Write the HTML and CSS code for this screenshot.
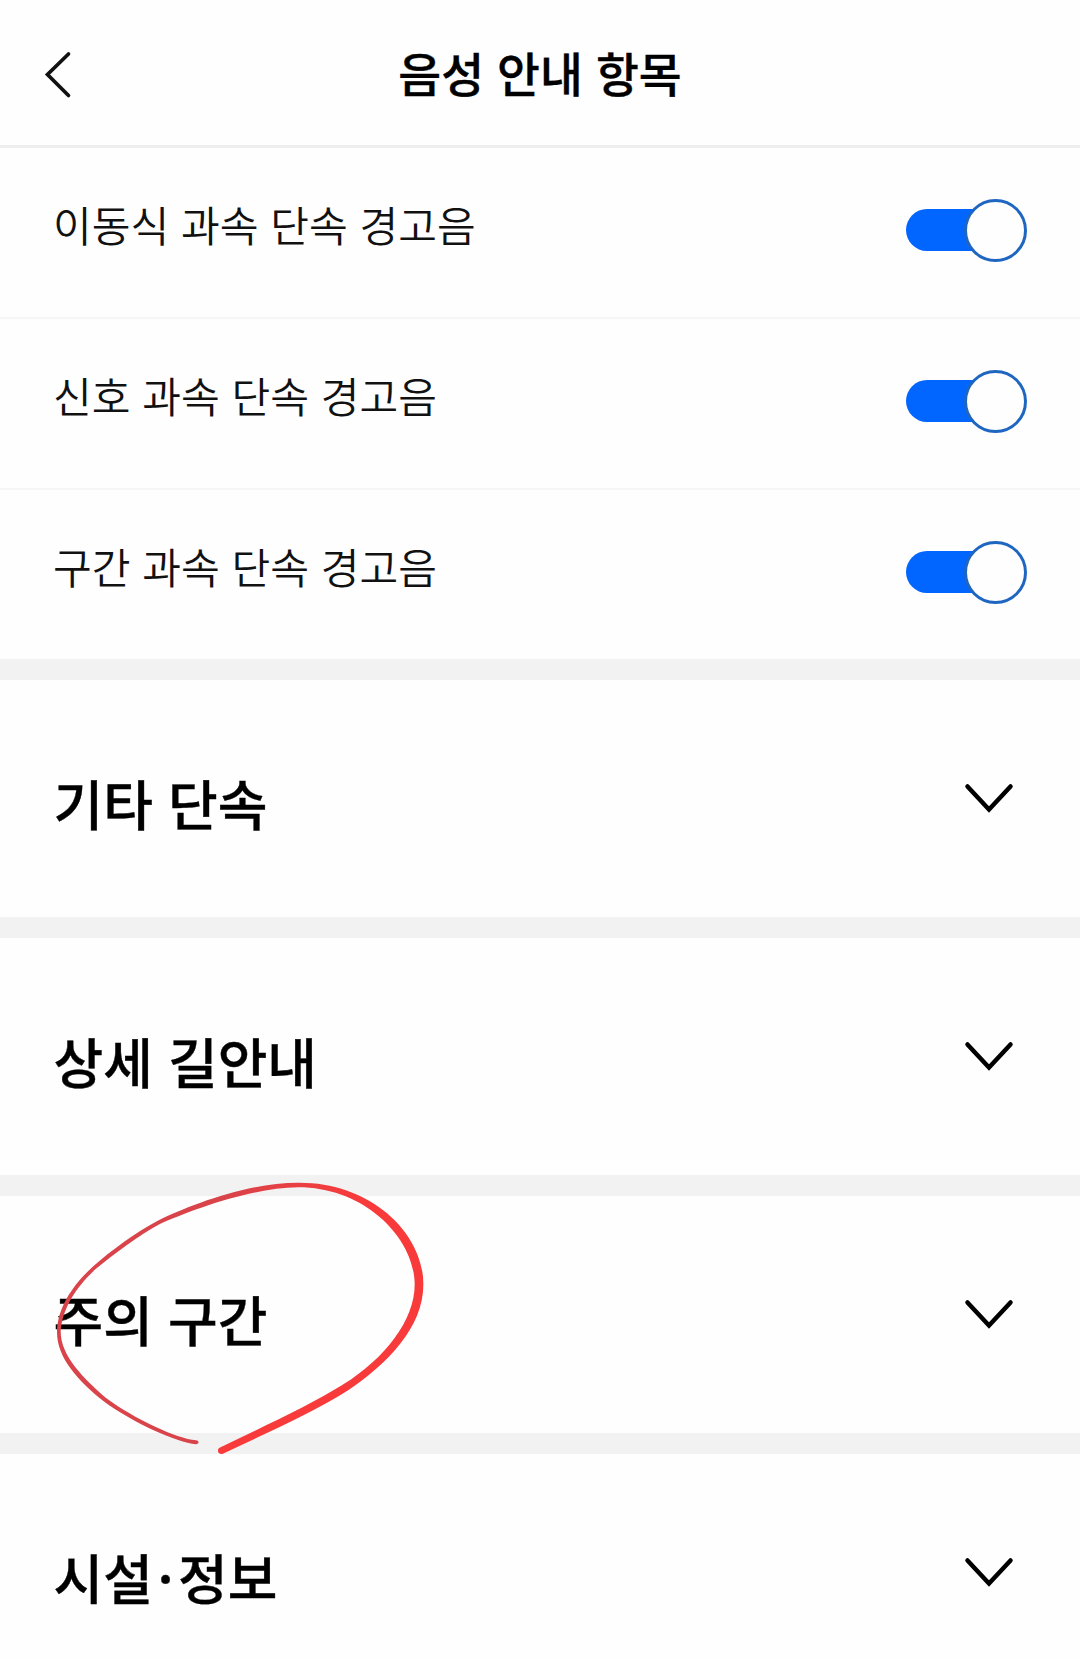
FILE: index.html
```html
<!DOCTYPE html>
<html lang="ko">
<head>
    <meta charset="UTF-8">
    <meta name="viewport" content="width=device-width, initial-scale=1.0">
    <title>음성 안내 항목</title>
    <link rel="stylesheet" href="styles.css">
</head>
<body>
    <header>
        <a class="back" href="#" aria-label="뒤로">
            <svg width="30" height="50" viewBox="0 0 30 50"><path d="M25.500 4 4.500 24.500 25.500 45.500"/></svg>
        </a>
        <h1>음성 안내 항목</h1>
    </header>

    <main>
        <ul class="items">
            <li>
                <span>이동식 과속 단속 경고음</span>
                <div class="toggle"><div class="knob"></div></div>
            </li>
            <li>
                <span>신호 과속 단속 경고음</span>
                <div class="toggle"><div class="knob"></div></div>
            </li>
            <li>
                <span>구간 과속 단속 경고음</span>
                <div class="toggle"><div class="knob"></div></div>
            </li>
        </ul>

        <section>
            <h2>기타 단속</h2>
            <svg class="arrow" width="50" height="32" viewBox="0 0 50 32"><path d="M3.500 3.500 25 26.500 46.500 3.500"/></svg>
        </section>
        <section>
            <h2>상세 길안내</h2>
            <svg class="arrow" width="50" height="32" viewBox="0 0 50 32"><path d="M3.500 3.500 25 26.500 46.500 3.500"/></svg>
        </section>
        <section>
            <h2>주의 구간</h2>
            <svg class="arrow" width="50" height="32" viewBox="0 0 50 32"><path d="M3.500 3.500 25 26.500 46.500 3.500"/></svg>
            <!-- Hand-drawn ring around the title -->
            <svg class="ring" width="420" height="310" viewBox="0 0 1260 930">
                <defs>
                    <linearGradient id="ink" gradientUnits="userSpaceOnUse" x1="600" y1="0" x2="1000" y2="0">
                        <stop offset="0" stop-color="#d9434a"/>
                        <stop offset="1" stop-color="#f93a3b"/>
                    </linearGradient>
                </defs>
                <path fill="url(#ink)" d="M498 853C440 846 310 790 220 723C145 662 80 594 81 514C84 440 128 376 188 320C245 270 318 217 382 183C474 138 650 68 805 68C1025 66 1182 222 1180 374C1180 500 1075 610 950 694L940 673C1065 595 1154 480 1154 374C1154 235 1005 82 805 82C660 84 480 152 388 193C326 227 255 280 196 328C138 382 97 445 92 514C92 588 160 655 228 714C312 776 440 836 498 841C508 842 508 852 498 853Z"/>
                <path fill="#f93a3b" d="M952 692C850 757 720 814 577 882C565 884 560 872 567 864C710 795 840 735 942 672Z"/>
            </svg>
        </section>
        <section>
            <h2>시설<span class="dot">·</span>정보</h2>
            <svg class="arrow" width="50" height="32" viewBox="0 0 50 32"><path d="M3.500 3.500 25 26.500 46.500 3.500"/></svg>
        </section>
    </main>
</body>
</html>
```
FILE: styles.css
```css
* {
    box-sizing: border-box;
}

body {
    background-color: #fefefe;
    color: #000000;
    font-family: "Noto Sans CJK KR", sans-serif;
    margin: 0;
    height: 1659px;
    overflow: hidden;
}

header {
    display: grid;
    grid-template-columns: 120px 1fr 120px;
    align-items: center;
    height: 148px;
    border-bottom: 3px solid #eeeeee;
}

h1 {
    margin: 0;
    padding-bottom: 2px;
    font-size: 46.6px;
    line-height: 72px;
    font-weight: 500;
    text-align: center;
    -webkit-text-stroke: 0.4px #000000;
}

.back {
    display: flex;
    padding: 4px 0 0 43px;
}

.back path {
    fill: none;
    stroke: #111111;
    stroke-width: 3.7;
    stroke-linecap: round;
}

.items {
    list-style: none;
    margin: 0;
    padding: 0;
}

.items li {
    display: flex;
    justify-content: space-between;
    align-items: center;
    height: 171px;
    padding: 0 53px 5px;
    border-bottom: 2px solid #f6f6f6;
}

.items li:last-child {
    height: 169px;
    border-bottom: none;
}

.items span {
    color: #111111;
    font-size: 42.1px;
    line-height: 60px;
    font-weight: 350;
    padding-bottom: 12px;
}

/* Toggle switch */
.toggle {
    position: relative;
    display: flex;
    justify-content: flex-end;
    width: 121px;
}

.toggle::before {
    content: '';
    position: absolute;
    left: 0;
    top: 10px;
    width: 90px;
    height: 42px;
    border-radius: 21px;
    background-color: #0066ff;
}

.knob {
    position: relative;
    width: 63px;
    height: 63px;
    border: 3px solid #1e66c0;
    border-radius: 50%;
    background-color: #fefefe;
}

section {
    position: relative;
    display: flex;
    justify-content: space-between;
    align-items: center;
    height: 258px;
    padding: 0 66px 0 53.5px;
    border-top: 21px solid #f2f2f2;
}

h2 {
    margin: 0;
    font-size: 54px;
    line-height: 80px;
    font-weight: 500;
    padding-top: 8px;
    -webkit-text-stroke: 0.4px #000000;
}

.dot {
    margin: 0 4.5px;
}

.arrow path {
    fill: none;
    stroke: #000000;
    stroke-width: 4.5;
    stroke-linecap: round;
}

.ring {
    position: absolute;
    left: 30px;
    top: -36px;
    z-index: 1;
}
```
